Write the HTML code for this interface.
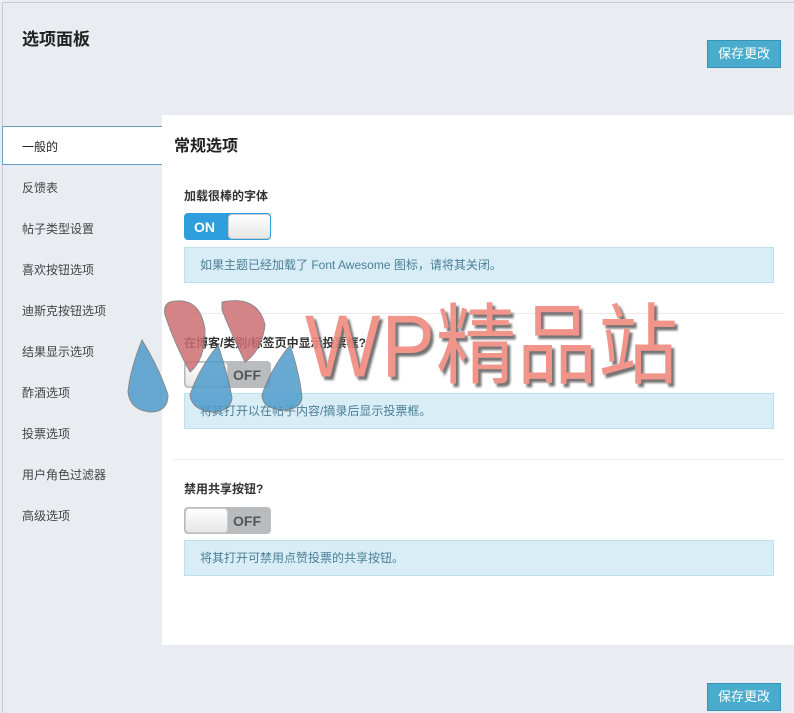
<!DOCTYPE html>
<html><head><meta charset="utf-8"><style>
*{margin:0;padding:0;box-sizing:border-box}
body{width:794px;height:713px;background:#e9ecf1;font-family:"Liberation Sans","Noto Sans CJK SC",sans-serif;position:relative;overflow:hidden;color:#333}
.a{position:absolute}
.frame{left:2px;top:2px;right:0;bottom:0;border-left:1px solid #ccc;border-top:1px solid #ccc}
h1{position:absolute;left:22px;top:25px;font-size:17px;font-weight:bold;color:#222}
.btn{position:absolute;left:707px;width:74px;height:28px;background:#4aaccd;border:1px solid #3592b4;color:#fff;font-size:13px;text-align:center;line-height:26px}
.panel{left:162px;top:115px;width:632px;height:530px;background:#fff}
.nav{left:22px;font-size:12px;color:#444}
.act{left:2px;top:126px;width:160px;height:39px;background:#fff;border:1px solid #6a9fc7;border-right:none}
.lbl{left:184px;font-size:12px;font-weight:bold;color:#333}
.tg{left:184px;width:87px;height:27px;border-radius:4px;border:1px solid #bbb;overflow:hidden}
.info{left:184px;width:590px;height:36px;background:#d9edf7;border:1px solid #bde0ee;font-size:12px;color:#4a7f96;padding-left:15px;line-height:34px}
.hr{left:174px;width:610px;height:1px;background:#ececec}
</style></head><body>
<div class="a frame"></div>
<h1>选项面板</h1>
<div class="btn" style="top:40px">保存更改</div>
<div class="btn" style="top:683px">保存更改</div>
<div class="a panel"></div>
<div class="a act"></div>
<div class="a nav" style="top:138px;color:#222">一般的</div>
<div class="a nav" style="top:179px">反馈表</div>
<div class="a nav" style="top:220px">帖子类型设置</div>
<div class="a nav" style="top:261px">喜欢按钮选项</div>
<div class="a nav" style="top:302px">迪斯克按钮选项</div>
<div class="a nav" style="top:343px">结果显示选项</div>
<div class="a nav" style="top:384px">酢酒选项</div>
<div class="a nav" style="top:425px">投票选项</div>
<div class="a nav" style="top:466px">用户角色过滤器</div>
<div class="a nav" style="top:507px">高级选项</div>
<div class="a" style="left:174px;top:132px;font-size:16px;font-weight:bold;color:#222">常规选项</div>

<div class="a lbl" style="top:187px">加载很棒的字体</div>
<div class="a tg" style="top:213px;background:#2e9fdc;border-color:#2e9fdc">
 <span class="a" style="left:9px;top:5px;color:#fff;font-size:14px;font-weight:bold">ON</span>
 <div class="a" style="left:43px;top:0;width:43px;height:25px;background:linear-gradient(#fff,#e6e6e6);border-radius:4px;border:1px solid #ccc"></div>
</div>
<div class="a info" style="top:247px">如果主题已经加载了 Font Awesome 图标，请将其关闭。</div>
<div class="a hr" style="top:313px"></div>

<div class="a lbl" style="top:334px">在博客/类别/标签页中显示投票框?</div>
<div class="a tg" style="top:361px;background:#b8bcbf">
 <div class="a" style="left:0;top:0;width:43px;height:25px;background:linear-gradient(#fff,#e6e6e6);border-radius:4px;border:1px solid #ccc"></div>
 <span class="a" style="left:48px;top:5px;color:#555;font-size:14px;font-weight:bold">OFF</span>
</div>
<div class="a info" style="top:393px">将其打开以在帖子内容/摘录后显示投票框。</div>
<div class="a hr" style="top:459px"></div>

<div class="a lbl" style="top:480px">禁用共享按钮?</div>
<div class="a tg" style="top:507px;background:#b8bcbf">
 <div class="a" style="left:0;top:0;width:43px;height:25px;background:linear-gradient(#fff,#e6e6e6);border-radius:4px;border:1px solid #ccc"></div>
 <span class="a" style="left:48px;top:5px;color:#555;font-size:14px;font-weight:bold">OFF</span>
</div>
<div class="a info" style="top:540px">将其打开可禁用点赞投票的共享按钮。</div>

<svg class="a" style="left:0;top:0" width="794" height="713">
 <g opacity="0.85">
 <path d="M170 302 Q200 295 205 330 Q205 360 190 372 Q175 345 165 315 Q163 305 170 302Z" fill="#cd6f73" stroke="#777" stroke-width="1"/>
 <path d="M222 302 Q258 295 265 325 Q262 350 245 362 Q232 335 222 310Z" fill="#cd6f73" stroke="#777" stroke-width="1"/>
 <path d="M142 340 Q160 370 168 395 Q168 412 150 412 Q130 410 128 392 Q130 370 142 340Z" fill="#4f9ccc" stroke="#777" stroke-width="1"/>
 <path d="M218 345 Q228 375 232 398 Q230 412 212 412 Q192 410 190 395 Q198 370 218 345Z" fill="#4f9ccc" stroke="#777" stroke-width="1"/>
 <path d="M290 345 Q300 375 302 398 Q300 410 282 410 Q262 408 262 395 Q270 370 290 345Z" fill="#4f9ccc" stroke="#777" stroke-width="1"/>
 </g>
</svg>
<div class="a" style="left:305px;top:292px;font-size:80px;line-height:100px;color:#f08a7e;text-shadow:3px 3px 2px #666;letter-spacing:1px;opacity:0.9;transform:scaleY(1.1);transform-origin:left top">WP精品站</div>
</body></html>
